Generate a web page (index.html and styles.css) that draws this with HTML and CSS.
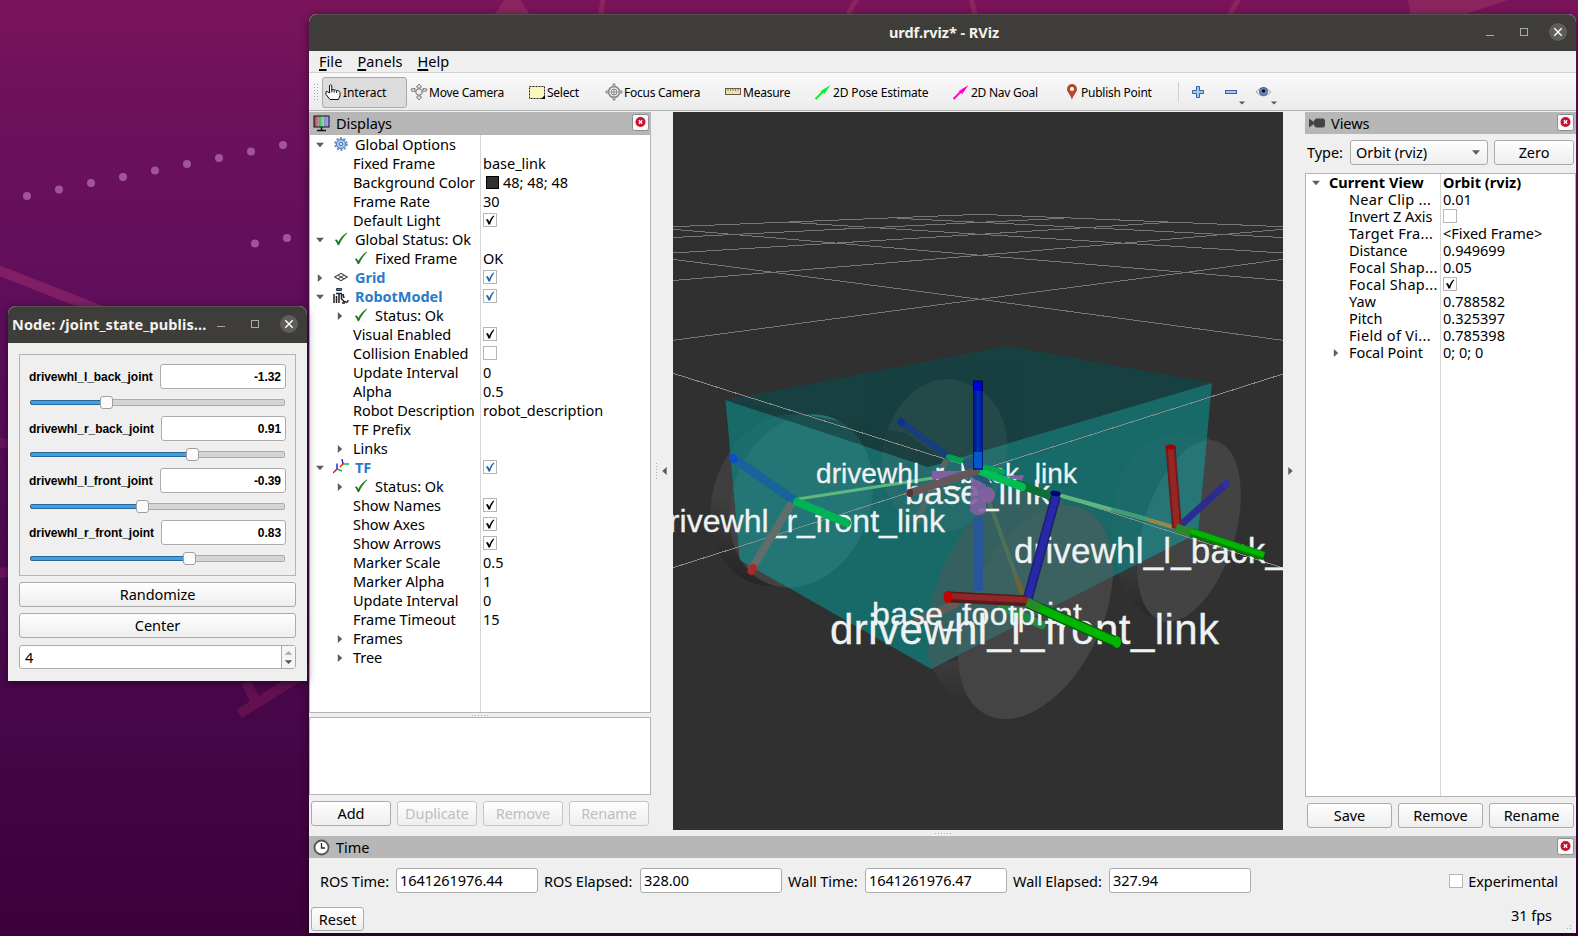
FILE: index.html
```html
<!DOCTYPE html>
<html lang="en">
<head>
<meta charset="utf-8">
<title>urdf.rviz* - RViz</title>
<link rel="stylesheet" href="styles.css">
</head>
<body>
<svg class="defs" width="0" height="0">
  <symbol id="check" viewBox="0 0 14 14"><rect x=".5" y=".5" width="13" height="13" fill="#fff" stroke="#b6b6b6"/><path d="M2.800 6.800l2-.7 1.600 2.600C7.200 6.300 8.600 4 10.600 2.400l.8.6C9.600 5.300 8.100 8 7.100 11.500H5.400C4.900 9.700 4 8 2.800 6.800z" fill="currentColor"/></symbol>
  <symbol id="box" viewBox="0 0 14 14"><rect x=".5" y=".5" width="13" height="13" fill="#fff" stroke="#b6b6b6"/></symbol>
  <symbol id="down" viewBox="0 0 8 5"><path d="M0 .3h8L4 4.700z" fill="#5c5c5c"/></symbol>
  <symbol id="right" viewBox="0 0 5 8"><path d="M.3 0v8L4.700 4z" fill="#5c5c5c"/></symbol>
  <symbol id="ok" viewBox="0 0 14 14"><path d="M.8 8.200c.8-.9 2-.9 2.600.1l.9 1.800C6.200 6.500 9 3 12.800.6l.4.4C9.800 4.500 7.300 8 5.400 12.600c-.7.7-1.700.7-2 0C2.800 10.800 2.200 9.200.8 8.200z" fill="#1f7a1f"/></symbol>
  <symbol id="close" viewBox="0 0 17 17"><rect x=".5" y=".5" width="16" height="16" rx="2" fill="#f8f8f8" stroke="#8d8d8d"/><circle cx="8.500" cy="8" r="5" fill="#c8102e"/><path d="M6.800 6.300l3.400 3.400m0-3.400L6.800 9.700" stroke="#fff" stroke-width="1.300"/></symbol>
  <symbol id="cog" viewBox="0 0 14 14"><circle cx="7" cy="7" r="5.800" fill="none" stroke="#5d8cc4" stroke-width="1.800" stroke-dasharray="2.200 1.440"/><circle cx="7" cy="7" r="4.500" fill="#a9c8ea" stroke="#4478b8"/><circle cx="7" cy="7" r="1.700" fill="#d8e6f5" stroke="#4478b8"/></symbol>
</svg>

<svg class="wallpaper" viewBox="0 0 1578 936">
  <g fill="#a05596"><circle cx="27" cy="196" r="4"/><circle cx="59" cy="189.500" r="4"/><circle cx="91" cy="183" r="4"/><circle cx="123" cy="177" r="4"/><circle cx="155" cy="170.500" r="4"/><circle cx="187" cy="164" r="4"/><circle cx="219" cy="158" r="4"/><circle cx="251" cy="151.500" r="4"/><circle cx="283" cy="145" r="4"/><circle cx="255" cy="243.500" r="4"/><circle cx="287" cy="238" r="4"/></g>
  <g fill="none" stroke="#801e66" stroke-width="10"><path d="M-10 267L130 322"/><path d="M-5 442l30 4M-5 573l30-2" stroke="#6a1460"/><path d="M239 714l90-56M246 682l12 24" stroke="#621050"/></g>
  <path d="M504 0h17l8 14h-34z" fill="#8c2460"/><path d="M1408 0h100l-42 14h-56z" fill="#8c2460"/>
  <path d="M516-2l10 16M603-2l-2 16M857-2l-9 16M971-2l4 16M1239-2l-9 16" stroke="#8c2460" stroke-width="5"/>
</svg>

<section class="window node">
  <header class="titlebar"><span class="caption">Node: /joint_state_publis...</span>
    <svg class="winctl" width="86" height="20" viewBox="0 0 86 20"><path d="M4 12.500h8" stroke="#aaa"/><rect x="38.500" y="6.500" width="7" height="7" fill="none" stroke="#aaa"/><circle cx="76" cy="10" r="9" fill="#5f5e5b"/><path d="M72.300 6.300l7.400 7.400m0-7.400l-7.400 7.400" stroke="#fff" stroke-width="1.400"/></svg>
  </header>
  <div class="node-body">
    <div class="joints">
      <div class="joint"><label>drivewhl_l_back_joint</label><output class="w1">-1.32</output></div>
      <div class="slider"><i style="width:76px"></i><b></b></div>
      <div class="joint"><label>drivewhl_r_back_joint</label><output>0.91</output></div>
      <div class="slider"><i style="width:162px"></i><b></b></div>
      <div class="joint"><label>drivewhl_l_front_joint</label><output class="w1">-0.39</output></div>
      <div class="slider"><i style="width:112px"></i><b></b></div>
      <div class="joint"><label>drivewhl_r_front_joint</label><output>0.83</output></div>
      <div class="slider"><i style="width:159px"></i><b></b></div>
    </div>
    <button class="btn">Randomize</button>
    <button class="btn">Center</button>
    <div class="spin"><span>4</span><svg width="14" height="22" viewBox="0 0 14 22"><path d="M3 8.500h8L7 4.500z" fill="#aaa"/><path d="M3 14.500h8L7 18.500z" fill="#555"/></svg></div>
  </div>
</section>

<section class="window rviz">
  <header class="titlebar main-title"><span class="caption">urdf.rviz* - RViz</span>
    <svg class="winctl" width="86" height="20" viewBox="0 0 86 20"><path d="M4 13.500h8" stroke="#aaa"/><rect x="38.500" y="6.500" width="7" height="7" fill="none" stroke="#aaa"/><circle cx="76" cy="10" r="9" fill="#5f5e5b"/><path d="M72.300 6.300l7.400 7.400m0-7.400l-7.400 7.400" stroke="#fff" stroke-width="1.400"/></svg>
  </header>
  <nav class="menubar"><span><u>F</u>ile</span><span><u>P</u>anels</span><span><u>H</u>elp</span></nav>

  <div class="toolbar">
    <div class="grip"></div>
    <div class="tool t-interact"><svg width="18" height="18" viewBox="0 0 18 18"><path d="M5.500 10V2.500q1.200-1.300 2.300 0V7q1.300-1 2.400.2 1.200-.8 2.300.4 1.300-.6 2.400.5l1.100 1.200v3.500l-1.600 3.700H6L2 11.500V8.700h1.500z" fill="#fff" stroke="#111" stroke-linejoin="round"/><path d="M7.800 6.500v3M10.200 7.500v2M12.600 8v2" stroke="#111"/></svg>Interact</div>
    <div class="tool t-move"><svg width="18" height="18" viewBox="0 0 18 18"><g fill="#eee" stroke="#777"><path d="M9 1l2.500 3H10v10h1.500L9 17l-2.500-3H8V4H6.500z"/><path d="M1 6l4-.5-.5 1.200L9 8.500l4.500-1.800L13 5.500l4 .5-1.500 3-1-1.200L9 10.500 3.500 7.800l-1 1.200z"/><circle cx="9" cy="9" r="3.200"/></g></svg>Move Camera</div>
    <div class="tool t-select"><svg width="18" height="18" viewBox="0 0 18 18"><rect x="1.500" y="3.500" width="15" height="12" fill="#fbf7bb" stroke="#222" stroke-dasharray="2 1"/><path d="M17 12v4h-4z"/></svg>Select</div>
    <div class="tool t-focus"><svg width="18" height="18" viewBox="0 0 18 18"><g fill="none" stroke="#858585"><circle cx="9" cy="9" r="5.500" stroke-width="1.500"/><circle cx="9" cy="9" r="3"/><path d="M6 9h6M9 6v6"/><path d="M1 8h3v2H1zM14 8h3v2h-3zM8 1h2v3H8zM8 14h2v3H8z" fill="#ddd"/></g></svg>Focus Camera</div>
    <div class="tool t-measure"><svg width="18" height="18" viewBox="0 0 18 18"><rect x="1.500" y="5.500" width="15" height="6" fill="#efe3a4" stroke="#625a4c"/><path d="M4 6v2M6.500 6v2M9 6v2M11.500 6v2M14 6v2" stroke="#8d8468"/></svg>Measure</div>
    <div class="tool t-pose"><svg width="18" height="18" viewBox="0 0 18 18"><path d="M1.500 16L8 9.500" stroke="#0bf02c" stroke-width="2"/><path d="M16.500 2L6 8.500l2 .2-.6 1.900 2.300-.5.100 1.700z" fill="#0bf02c"/></svg>2D Pose Estimate</div>
    <div class="tool t-nav"><svg width="18" height="18" viewBox="0 0 18 18"><path d="M1.500 16L8 9.500" stroke="#ff00d4" stroke-width="2"/><path d="M16.500 2L6 8.500l2 .2-.6 1.900 2.300-.5.100 1.700z" fill="#ff00d4"/></svg>2D Nav Goal</div>
    <div class="tool t-point"><svg width="12" height="18" viewBox="0 0 12 18"><path d="M6 17C5 12 1 9.500 1 6a5 5 0 0110 0c0 3.500-4 6-5 11z" fill="#b8472a"/><circle cx="6" cy="6" r="2" fill="#fff"/></svg>Publish Point</div>
    <div class="sep"></div>
    <div class="tool t-plus"><svg width="14" height="14" viewBox="0 0 14 14"><path d="M5.500 1.500h3v4h4v3h-4v4h-3v-4h-4v-3h4z" fill="#a6c8ee" stroke="#2f62a6"/></svg></div>
    <div class="tool t-minus"><svg width="22" height="26" viewBox="0 0 22 26"><rect x="1.500" y="11.500" width="11" height="3" fill="#a6c8ee" stroke="#2f62a6"/><path d="M15 22.500h6l-3 3z" fill="#555"/></svg></div>
    <div class="tool t-eye"><svg width="24" height="26" viewBox="0 0 24 26"><path d="M1 13q7-9 15 0-8 8-15 0z" fill="#e8e8e8" stroke="#aaa"/><circle cx="8.500" cy="12.500" r="4" fill="#6a86cc" stroke="#515a78"/><circle cx="8.500" cy="12" r="1.800" fill="#111"/><path d="M16 22.500h6l-3 3z" fill="#555"/></svg></div>
  </div>

  <div class="workspace">
    <aside class="dock displays">
      <div class="dock-title"><svg width="17" height="17" viewBox="0 0 17 17"><defs><linearGradient id="mon"><stop offset="0" stop-color="#a44"/><stop offset=".33" stop-color="#b99"/><stop offset=".36" stop-color="#4b6"/><stop offset=".66" stop-color="#9d9"/><stop offset=".7" stop-color="#88d"/><stop offset="1" stop-color="#aae"/></linearGradient></defs><rect x="1" y="1" width="15" height="11" fill="url(#mon)" stroke="#111"/><path d="M8.500 12v3M4 15.500h9" stroke="#111" stroke-width="1.500"/></svg><span>Displays</span><svg class="x" width="17" height="17"><use href="#close"/></svg></div>
      <div class="tree tree-a">
        <div class="row"><div class="k"><svg class="ar"><use href="#down"/></svg><svg class="ic"><use href="#cog"/></svg>Global Options</div></div>
        <div class="row"><div class="k leaf">Fixed Frame</div><div class="v">base_link</div></div>
        <div class="row"><div class="k leaf">Background Color</div><div class="v"><i class="swatch"></i>48; 48; 48</div></div>
        <div class="row"><div class="k leaf">Frame Rate</div><div class="v">30</div></div>
        <div class="row"><div class="k leaf">Default Light</div><div class="v"><svg class="cb"><use href="#check"/></svg></div></div>
        <div class="row"><div class="k"><svg class="ar"><use href="#down"/></svg><svg class="ic"><use href="#ok"/></svg>Global Status: Ok</div></div>
        <div class="row"><div class="k l1"><i class="ar"></i><svg class="ic"><use href="#ok"/></svg>Fixed Frame</div><div class="v">OK</div></div>
        <div class="row"><div class="k hot"><svg class="ar"><use href="#right"/></svg><svg class="ic" viewBox="0 0 14 14"><path d="M.8 7L7 3.300 13.200 7 7 10.700zM3.900 5.100l6.200 3.800M10.100 5.100L3.900 8.900" fill="none" stroke="#444" stroke-width="1.100"/></svg>Grid</div><div class="v blue"><svg class="cb"><use href="#check"/></svg></div></div>
        <div class="row"><div class="k hot"><svg class="ar"><use href="#down"/></svg><svg class="ic robot" viewBox="0 0 16 16"><rect x="3" y="0" width="6" height="3" rx="1" fill="#234"/><rect x="4" y="1" width="4" height="1" fill="#57c"/><path d="M1 6v9M3 5.500h6M3.500 8v7M6 6v9M8.500 6v5l3 3M9 15h3M10 6l1 4M12 13c1 2 3 2 3-1" fill="none" stroke="#222" stroke-width="1.500"/></svg>RobotModel</div><div class="v blue"><svg class="cb"><use href="#check"/></svg></div></div>
        <div class="row"><div class="k l1"><svg class="ar"><use href="#right"/></svg><svg class="ic"><use href="#ok"/></svg>Status: Ok</div></div>
        <div class="row"><div class="k leaf">Visual Enabled</div><div class="v"><svg class="cb"><use href="#check"/></svg></div></div>
        <div class="row"><div class="k leaf">Collision Enabled</div><div class="v"><svg class="cb"><use href="#box"/></svg></div></div>
        <div class="row"><div class="k leaf">Update Interval</div><div class="v">0</div></div>
        <div class="row"><div class="k leaf">Alpha</div><div class="v">0.5</div></div>
        <div class="row"><div class="k leaf">Robot Description</div><div class="v">robot_description</div></div>
        <div class="row"><div class="k leaf">TF Prefix</div></div>
        <div class="row"><div class="k l1"><svg class="ar"><use href="#right"/></svg><span class="t">Links</span></div></div>
        <div class="row"><div class="k hot"><svg class="ar"><use href="#down"/></svg><svg class="ic robot" viewBox="0 0 16 16"><g fill="none" stroke-width="1.400"><path d="M4 10L0 14M10 5L7 8" stroke="#e01010"/><path d="M4 10l5 2M10 5h6" stroke="#10c020"/><path d="M4 10V4.500M10 5L9 0" stroke="#2020e0"/></g></svg>TF</div><div class="v blue"><svg class="cb"><use href="#check"/></svg></div></div>
        <div class="row"><div class="k l1"><svg class="ar"><use href="#right"/></svg><svg class="ic"><use href="#ok"/></svg>Status: Ok</div></div>
        <div class="row"><div class="k leaf">Show Names</div><div class="v"><svg class="cb"><use href="#check"/></svg></div></div>
        <div class="row"><div class="k leaf">Show Axes</div><div class="v"><svg class="cb"><use href="#check"/></svg></div></div>
        <div class="row"><div class="k leaf">Show Arrows</div><div class="v"><svg class="cb"><use href="#check"/></svg></div></div>
        <div class="row"><div class="k leaf">Marker Scale</div><div class="v">0.5</div></div>
        <div class="row"><div class="k leaf">Marker Alpha</div><div class="v">1</div></div>
        <div class="row"><div class="k leaf">Update Interval</div><div class="v">0</div></div>
        <div class="row"><div class="k leaf">Frame Timeout</div><div class="v">15</div></div>
        <div class="row"><div class="k l1"><svg class="ar"><use href="#right"/></svg><span class="t">Frames</span></div></div>
        <div class="row"><div class="k l1"><svg class="ar"><use href="#right"/></svg><span class="t">Tree</span></div></div>
        <div class="row fill"><div class="k"></div></div>
      </div>
      <div class="dots-h"></div>
      <div class="help"></div>
      <div class="buttons"><button class="btn">Add</button><button class="btn" disabled>Duplicate</button><button class="btn" disabled>Remove</button><button class="btn" disabled>Rename</button></div>
    </aside>

    <div class="gutter"><i class="dots-v"></i><svg width="5" height="8" viewBox="0 0 5 8"><path d="M4.700 0v8L.3 4z" fill="#5c5c5c"/></svg></div>

    <svg class="scene" viewBox="673 112 610 718" width="610" height="718">
      <defs>
        <clipPath id="boxClip"><path d="M725.500 400L1007 346l205 37-14 150-267 136-191-109z"/></clipPath>
        <linearGradient id="side" x1="0" y1="0" x2="0" y2="1"><stop offset="0" stop-color="#3c3c3c"/><stop offset=".6" stop-color="#3f3f3f"/><stop offset="1" stop-color="#262626"/></linearGradient>
        <linearGradient id="sideFront" x1="0" y1="0" x2="0" y2="1"><stop offset="0" stop-color="#3d3d3d"/><stop offset="1" stop-color="#2c2c2c"/></linearGradient>
        <linearGradient id="bluev"><stop offset="0" stop-color="#001070"/><stop offset=".5" stop-color="#0030b8"/><stop offset="1" stop-color="#001878"/></linearGradient>
      </defs>
      <rect x="673" y="112" width="610" height="718" fill="#303030"/>
      <g fill="url(#side)">
        <ellipse cx="782" cy="500" rx="69" ry="88" transform="rotate(20 782 500)"/>
        <path d="M1177 433q-65 8-65 100 5 78 50 87l20 3 28-185z"/>
      </g>
      <path d="M931 665q16 34 60 50l-8-60z" fill="url(#sideFront)"/>
      <ellipse cx="801" cy="501" rx="69" ry="89" transform="rotate(21 801 501)" fill="#434141"/>
      <ellipse cx="1189" cy="531" rx="46" ry="94" transform="rotate(17 1189 531)" fill="#434343"/>
      <path d="M725.500 400L1007 346l205 37-284 84z" fill="#194040"/>
      <path d="M725.500 400L928 467l284-84-14 150-267 136-191-109z" fill="#186a69"/>
      <g clip-path="url(#boxClip)">
        <ellipse cx="782" cy="500" rx="69" ry="88" transform="rotate(20 782 500)" fill="#1c6d6d"/>
        <ellipse cx="801" cy="501" rx="69" ry="89" transform="rotate(21 801 501)" fill="#247676"/>
        <path d="M1177 433q-65 8-65 100 5 78 50 87l20 3 28-185z" fill="#1c6a6a"/>
        <ellipse cx="1189" cy="531" rx="46" ry="94" transform="rotate(17 1189 531)" fill="#267677"/>
        <g fill="#6a8080" opacity=".15"><ellipse cx="940" cy="453" rx="57" ry="75" transform="rotate(14 940 453)"/><ellipse cx="950" cy="458" rx="56" ry="75" transform="rotate(14 950 458)"/></g>
        <path d="M725.500 400L928 467l18-5-40-29z" fill="#173c3c" opacity=".65"/>
        <ellipse cx="1000" cy="592" rx="62" ry="114" transform="rotate(24 1000 592)" fill="#34615f"/>
      </g>
      <ellipse cx="1035.500" cy="612" rx="67" ry="114" transform="rotate(25 1035.500 612)" fill="#444"/>
      <g clip-path="url(#boxClip)"><ellipse cx="1035.500" cy="612" rx="67" ry="114" transform="rotate(25 1035.500 612)" fill="#3b6260"/></g>

      <g fill="none" stroke="#777" stroke-width="1" shape-rendering="crispEdges">
        <path d="M673 226.700L980 214.300l303 12.400M673 237.500L980 222.300l303 15.200M896.800 218.300L980 222.300l83.500-4M673 253L980 234.300l303 18.700M789.500 222.300L980 234.300l190.500-12M673 280.500L980 255.300l303 25.200M673 229.300l165 14 142 12 142-12 161-14M673 340.300l307-41 303 41M673 259.300l100 13 207 27 207-27 96-13"/>
        <path d="M673 373.300L980 470l303-96M673 567.700L980 470l303 98" stroke="#878d8d"/>
      </g>

      <g fill="none" stroke-linecap="round">
        <path d="M978.500 517v74" stroke="#28569a" stroke-width="9" stroke-linecap="butt"/>
        <path d="M948 457l-31 63" stroke="#4e6867" stroke-width="6"/>
        <path d="M901 422l47 34" stroke="#163f7c" stroke-width="7"/><path d="M901 422l.5.500" stroke="#0d2f98" stroke-width="7"/>
        <path d="M949 457l19 6" stroke="#00a050" stroke-width="6"/>
        <path d="M798 499l135-21" stroke="#5fb87c" stroke-width="3"/>
        <path d="M733 458l62 43" stroke="#17649a" stroke-width="9" stroke-linecap="butt"/><path d="M733 458l1 1" stroke="#0850c8" stroke-width="8"/>
        <path d="M955 604l-38 17" stroke="#645b59" stroke-width="8"/>
        <path d="M1002 607l40 18" stroke="#218948" stroke-width="8"/>
        <path d="M987 496l34 94" stroke="#4c7158" stroke-width="4"/><path d="M1017 579l5 13" stroke="#6d6434" stroke-width="5"/>
      </g>
      <g class="frame-names">
        <text x="816" y="483" font-size="28" textLength="261">drivewhl_r_back_link</text>
        <text x="905" y="504" font-size="34" textLength="145">base_link</text>
        <text x="651" y="531.500" font-size="32" textLength="294">drivewhl_r_front_link</text>
        <text x="1014" y="562.500" font-size="35" textLength="324">drivewhl_l_back_link</text>
        <text x="872" y="625" font-size="32" textLength="210">base_footprint</text>
        <text x="830" y="643.500" font-size="42" textLength="389">drivewhl_l_front_link</text>
      </g>
      <g fill="#8060a0"><path d="M932 471h36v8h-36zM1004 476l20-1-2 6z"/><path d="M971 478h15v34q-8 7-16-1z" opacity=".9"/><circle cx="987" cy="495" r="8"/></g>
      <path d="M962 461l16-8 14 34-10-4-15-8z" fill="#28577c"/>
      <g fill="none" stroke-linecap="round">
        <path d="M792 503l-41 67" stroke="#5f6e6c" stroke-width="8" stroke-linecap="butt"/><path d="M753 568l-1.500 3" stroke="#a82a28" stroke-width="8"/>
        <path d="M797 502l50 21" stroke="#00b455" stroke-width="8"/>
        <path d="M1018 484l32 12" stroke="#0b7038" stroke-width="8"/>
        <path d="M980 471l42 16" stroke="#00bd55" stroke-width="8"/><path d="M985 467l18 5" stroke="#00a850" stroke-width="5"/>
        <path d="M976 471l-66 22" stroke="#655757" stroke-width="8"/><path d="M910 492v2" stroke="#55352f" stroke-width="6"/>
        <path d="M1062 496l84 23" stroke="#62b37c" stroke-width="4"/><path d="M1113 510l34 9" stroke="#429b79" stroke-width="4"/><path d="M1149 520l24 7" stroke="#8f8b4b" stroke-width="4"/>
        <path d="M1182 524l44-40" stroke="#2c2c90" stroke-width="7"/><path d="M1226 484l.5-.500" stroke="#3030a8" stroke-width="7"/>
        <path d="M1170.500 447l6.500 81" stroke="#6e1c1c" stroke-width="10" stroke-linecap="butt"/><path d="M1170.500 447l6.500 81" stroke="#962626" stroke-width="6" stroke-linecap="butt"/><ellipse cx="1170.500" cy="447" rx="5" ry="2.500" fill="#a40000"/>
        <path d="M1176 528l15 5" stroke="#2a8a2a" stroke-width="9" stroke-linecap="butt"/><path d="M1191 532l73 24" stroke="#058005" stroke-width="9" stroke-linecap="butt"/><path d="M1191 531l73 24" stroke="#02b602" stroke-width="5.500" stroke-linecap="butt"/>
        <path d="M1056 496l-28 102" stroke="#1e1e72" stroke-width="10" stroke-linecap="butt"/><path d="M1056 496l-28 102" stroke="#2828a6" stroke-width="7" stroke-linecap="butt"/><path d="M1053 493l5 1" stroke="#000078" stroke-width="5"/>
        <path d="M949 597l78 4" stroke="#581a1a" stroke-width="11" stroke-linecap="butt"/><path d="M949 596l78 4" stroke="#902828" stroke-width="6" stroke-linecap="butt"/><ellipse cx="948" cy="597" rx="4.500" ry="6" fill="#c40000"/>
        <path d="M1028 603l88 39" stroke="#075c07" stroke-width="11" stroke-linecap="butt"/><path d="M1028 603l88 39" stroke="#02b402" stroke-width="8" stroke-linecap="butt"/><path d="M1027 602l13 6" stroke="#2a8a2a" stroke-width="9" stroke-linecap="butt"/><ellipse cx="1117" cy="642" rx="4" ry="6" fill="#02b402"/>
      </g>
      <rect x="973" y="381" width="10" height="89" fill="url(#bluev)"/><rect x="973" y="381" width="10" height="10" fill="#0000d8"/><rect x="974" y="452" width="8" height="16" fill="#0058cc"/><path d="M973.500 391v-10h9v10" stroke="#000050" fill="none"/>
    </svg>

    <div class="gutter g-right"><svg width="5" height="8" viewBox="0 0 5 8"><path d="M.3 0v8L4.700 4z" fill="#5c5c5c"/></svg></div>

    <aside class="dock views">
      <div class="dock-title"><svg width="18" height="12" viewBox="0 0 18 12"><path d="M1 1.500L6 5V3.500L8 1.500h7.500L17 3v6l-1.500 1.500H8L6 8.500V7l-5 3.500z" fill="#444"/></svg><span>Views</span><svg class="x" width="17" height="17"><use href="#close"/></svg></div>
      <div class="typebar"><span>Type:</span><div class="combo">Orbit (rviz)<svg width="8" height="5"><use href="#down"/></svg></div><button class="btn zero">Zero</button></div>
      <div class="tree tree-b">
        <div class="row"><div class="k strong"><svg class="ar"><use href="#down"/></svg>Current View</div><div class="v strong">Orbit (rviz)</div></div>
        <div class="row"><div class="k leaf dots">Near Clip ...</div><div class="v">0.01</div></div>
        <div class="row"><div class="k leaf">Invert Z Axis</div><div class="v"><svg class="cb"><use href="#box"/></svg></div></div>
        <div class="row"><div class="k leaf dots">Target Fra...</div><div class="v">&lt;Fixed Frame&gt;</div></div>
        <div class="row"><div class="k leaf">Distance</div><div class="v">0.949699</div></div>
        <div class="row"><div class="k leaf dots">Focal Shap...</div><div class="v">0.05</div></div>
        <div class="row"><div class="k leaf dots">Focal Shap...</div><div class="v"><svg class="cb"><use href="#check"/></svg></div></div>
        <div class="row"><div class="k leaf">Yaw</div><div class="v">0.788582</div></div>
        <div class="row"><div class="k leaf">Pitch</div><div class="v">0.325397</div></div>
        <div class="row"><div class="k leaf dots">Field of Vi...</div><div class="v">0.785398</div></div>
        <div class="row"><div class="k l1"><svg class="ar"><use href="#right"/></svg>Focal Point</div><div class="v">0; 0; 0</div></div>
        <div class="row fill"><div class="k"></div></div>
      </div>
      <div class="buttons"><button class="btn">Save</button><button class="btn">Remove</button><button class="btn">Rename</button></div>
    </aside>
  </div>
  <div class="hsplit"></div>
  <footer class="time">
    <div class="dock-title"><svg width="17" height="17" viewBox="0 0 17 17"><circle cx="8.500" cy="8.500" r="7" fill="#fff" stroke="#555" stroke-width="1.800"/><path d="M8.500 4v5H12" fill="none" stroke="#222" stroke-width="1.300"/></svg><span>Time</span><svg class="x" width="17" height="17"><use href="#close"/></svg></div>
    <div class="clocks">
      <label class="c1">ROS Time:</label><output>1641261976.44</output>
      <label class="c2">ROS Elapsed:</label><output>328.00</output>
      <label class="c3">Wall Time:</label><output>1641261976.47</output>
      <label class="c4">Wall Elapsed:</label><output>327.94</output>
      <label class="exp"><svg class="cb"><use href="#box"/></svg><span>Experimental</span></label>
    </div>
    <div class="status"><button class="btn reset">Reset</button><span class="fps">31 fps</span><i class="size-grip"></i></div>
  </footer>
</section>
</body>
</html>
```
FILE: styles.css
```css
* { box-sizing: border-box; }
body {
  margin: 0;
  width: 1578px;
  height: 936px;
  overflow: hidden;
  position: relative;
  background: linear-gradient(#7a145a 0, #6d115a 110px, #5f0e5c 300px, #4e0a50 600px, #3c003a 936px);
  font: 14.500px/19px "Noto Sans", sans-serif;
  color: #000;
  letter-spacing: -0.050px;
  white-space: nowrap;
}
.defs { position: absolute; }
.wallpaper { position: absolute; inset: 0; width: 1578px; height: 936px; }
svg { display: block; flex: none; }

.window {
  position: absolute;
  display: flex;
  flex-direction: column;
  background: #efefef;
  border-radius: 8px 8px 0 0;
  box-shadow: 0 2px 9px rgba(0, 0, 0, .5);
}
.rviz { left: 309px; top: 14px; width: 1267px; height: 919px; }
.node { left: 8px; top: 306px; width: 299px; height: 375px; z-index: 2; }
.titlebar {
  height: 37px;
  flex: none;
  display: flex;
  align-items: center;
  justify-content: space-between;
  padding: 0 8px 2px 4px;
  border-radius: 8px 8px 0 0;
  background: #3e3d3a;
  border-top: 1px solid #55534f;
  color: #f4f2ee;
  font-weight: 700;
  letter-spacing: 0.120px;
}
.main-title .caption { flex: 1; padding-left: 93px; text-align: center; }
.main-title { letter-spacing: -0.050px; }
.btn, .combo {
  font: inherit;
  letter-spacing: inherit;
  color: #000;
  height: 25px;
  padding: 0;
  border: 1px solid #ababab;
  border-radius: 3px;
  background: linear-gradient(#fefefe, #eeeeee);
}
.btn:disabled { color: #bebebe; border-color: #c6c6c6; }

.node-body { padding: 11px 11px 0; display: flex; flex-direction: column; }
.node-body > .btn { margin-top: 6px; }
.joints { height: 222px; border: 1px solid #b4b4b4; padding: 9px 9px 0 9px; }
.joint {
  display: flex;
  align-items: center;
  justify-content: space-between;
  height: 25px;
  font: 700 12px/25px "Liberation Sans", Arial, sans-serif;
}
.joint label { padding-top: 1px; }
output {
  height: 25px;
  border: 1px solid #ababab;
  border-radius: 3px;
  background: #fff;
}
.joint output { width: 125px; padding-right: 4px; text-align: right; line-height: 25px; }
.joint .w1 { width: 126px; }
.slider {
  display: flex;
  align-items: center;
  height: 27px;
  margin: 0 1px;
  background: linear-gradient(#d5d5d5, #d5d5d5) 0 50% / 100% 5px no-repeat;
}
.slider i { height: 5px; border: 1px solid #286896; border-radius: 2px 0 0 2px; background: #3fa0e4; }
.slider::after { content: ""; flex: 1; height: 5px; border: 1px solid #ababab; border-left: 0; border-radius: 0 2px 2px 0; order: 2; }
.slider b { width: 13px; height: 13px; margin: 0 -6px; border: 1px solid #a0a0a0; border-radius: 3px; background: #fbfbfb; order: 1; z-index: 1; }
.spin {
  margin-top: 7px;
  height: 24px;
  display: flex;
  justify-content: space-between;
  border: 1px solid #ababab;
  border-radius: 3px;
  background: #fff;
  line-height: 22px;
  padding-left: 5px;
}
.spin svg { border-left: 1px solid #ababab; background: #f5f5f5; }

.menubar { height: 22px; flex: none; display: flex; gap: 15px; padding: 1px 10px 0; border-bottom: 1px solid #d2d2d2; letter-spacing: 0.050px; }
.menubar u { text-underline-offset: 2px; text-decoration-thickness: 1.500px; }
.toolbar {
  height: 38px;
  flex: none;
  display: flex;
  align-items: center;
  padding-top: 1px;
  background: linear-gradient(#f9f9f9, #ececec);
  border-bottom: 1px solid #b4b4b4;
  font-size: 12px;
  letter-spacing: -0.250px;
}
.grip { width: 5px; height: 18px; margin: 0 4px; background: radial-gradient(#aaa 0.700px, transparent 1px) 0 0 / 3px 3px; }
.tool { display: flex; align-items: center; gap: 1px; height: 31px; padding-left: 2px; flex: none; }
.t-interact { width: 85px; border: 1px solid #aaa; border-radius: 3px; background: #dcdcdc; padding-left: 1px; letter-spacing: -0.100px; }
.t-move { width: 119px; padding-left: 3px; }
.t-select { width: 77px; }
.t-focus { width: 119px; }
.t-measure { width: 90px; }
.t-pose { width: 138px; letter-spacing: -0.150px; }
.t-nav { width: 115px; }
.t-point { width: 113px; gap: 3px; padding-left: 1px; }
.sep { width: 1px; height: 20px; background: #cfcfcf; }
.t-plus { width: 44px; padding-left: 12px; }
.t-minus { width: 32px; padding-left: 1px; }
.t-eye { padding-left: 0; }

.workspace { height: 719px; padding-top: 1px; flex: none; display: flex; }
.dock { display: flex; flex-direction: column; }
.displays { width: 342px; }
.views { width: 271px; }
.dock-title { height: 22px; flex: none; display: flex; align-items: center; gap: 6px; padding: 0 2px 0 4px; background: #b7b7b7; }
.dock-title .x { margin-left: auto; margin-top: -2px; }
.views .dock-title { gap: 5px; padding-left: 3px; }
.gutter { width: 22px; flex: none; display: flex; align-items: center; justify-content: center; gap: 5px; padding-right: 2px; }
.g-right { padding-right: 8px; }
.dots-v { width: 1px; height: 16px; background: repeating-linear-gradient(#aaa 0 1px, transparent 1px 3px); }
.scene { display: block; }
.frame-names { font-family: "Liberation Sans", Arial, sans-serif; fill: #eef2f2; stroke: #eef2f2; stroke-width: 0.300px; letter-spacing: 0; }

.tree { border: 1px solid #b4b4b4; background: #fff; display: flex; flex-direction: column; overflow: hidden; }
.tree-a { height: 579px; }
.tree-b { height: 624px; margin-top: 8px; line-height: 17px; }
.row { display: flex; height: 19px; flex: none; }
.tree-b .row { height: 17px; }
.row.fill, .tree-b .row.fill { flex: 1; height: auto; }
.k { width: 171px; flex: none; display: flex; align-items: center; border-right: 1px solid #d6d6d6; }
.tree-b .k { width: 135px; }
.v { padding-left: 2px; display: flex; align-items: center; letter-spacing: 0; }
.leaf { padding-left: 43px; }
.l1 { padding-left: 20px; }
.t { padding-left: 3px; }
.ar { width: 8px; height: 8px; margin: 0 6px; }
.ic { width: 14px; height: 14px; margin-right: 7px; margin-left: 4px; margin-top: -2px; }
.ic.robot { width: 16px; height: 16px; margin-left: 3px; margin-right: 6px; }
.cb { width: 14px; height: 14px; margin-top: -1px; }
.blue { color: #2462a4; }
.hot { color: #2a7acb; font-weight: 700; }
.strong, .v.strong { font-weight: 700; letter-spacing: 0.050px; }
.dots { letter-spacing: 0.320px; }
.swatch { width: 13px; height: 13px; margin: 0 4px 0 3px; background: #303030; border: 1px solid #000; }
.tree-b .ar { margin-right: 9px; }
.dots-h { height: 4px; flex: none; }
.dots-h, .hsplit { background: repeating-linear-gradient(90deg, #aaa 0 1px, transparent 1px 3px) 50% 50% / 16px 1px no-repeat; }
.help { height: 78px; flex: none; background: #fff; border: 1px solid #b4b4b4; }
.buttons { display: flex; gap: 6px; padding: 6px 2px 0; }
.buttons .btn { flex: 1; }
.hsplit { height: 6px; flex: none; }
.typebar { height: 31px; padding: 6px 2px 0; display: flex; align-items: center; }
.typebar span { width: 43px; }
.combo { width: 138px; margin-right: 6px; padding: 0 7px 0 5px; display: flex; align-items: center; justify-content: space-between; }
.zero { width: 80px; }

.clocks { height: 25px; margin-top: 10px; display: flex; align-items: center; padding-left: 11px; }
.clocks output { width: 142px; padding-left: 3px; line-height: 23px; }
.clocks label { padding-top: 2px; }
.c1 { width: 76px; }
.clocks .c2 { width: 102px; padding-left: 6px; }
.clocks .c3 { width: 83px; padding-left: 6px; }
.clocks .c4 { width: 102px; padding-left: 6px; }
.exp { margin-left: auto; padding-right: 18px; display: flex; align-items: center; gap: 5px; }
.status { height: 40px; display: flex; align-items: flex-end; padding: 0 3px 2px 2px; }
.reset { width: 53px; height: 24px; }
.fps { margin-left: auto; padding-bottom: 6px; }
.size-grip { width: 10px; height: 10px; margin-left: 11px; background: radial-gradient(#aaa 0.700px, transparent 1px) 0 0 / 3px 3px; clip-path: polygon(100% 0, 100% 100%, 0 100%); }
```
